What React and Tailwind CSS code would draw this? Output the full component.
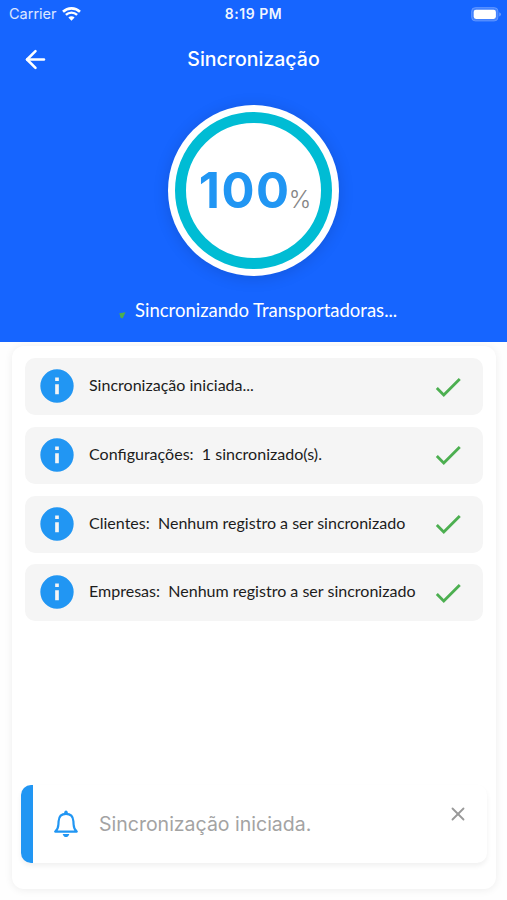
import { ArrowLeft, X } from 'lucide-react'

// ─── Data ──────────────────────────────────────────────────────────────────────
const SYNC_LOGS = [
  { id: 'start', text: 'Sincronização iniciada...' },
  { id: 'config', text: 'Configurações:  1 sincronizado(s).' },
  { id: 'clients', text: 'Clientes:  Nenhum registro a ser sincronizado' },
  { id: 'companies', text: 'Empresas:  Nenhum registro a ser sincronizado' },
]

// ─── Icons ─────────────────────────────────────────────────────────────────────
const WifiIcon = () => (
  <svg width="19" height="14" viewBox="0 0 19 14" fill="none" stroke="white">
    <path d="M1 4.8a12.2 12.2 0 0 1 17 0" strokeWidth="2.6" />
    <path d="M3.9 7.9a8 8 0 0 1 11.2 0" strokeWidth="2.4" />
    <path d="M6.4 10.6a4.4 4.4 0 0 1 6.2 0l-3.1 3.2z" fill="white" stroke="none" />
  </svg>
)

const BatteryIcon = () => (
  <svg width="31" height="15" viewBox="0 0 31 15">
    <rect x="0.5" y="0.5" width="26.6" height="13.6" rx="4" fill="white" fillOpacity="0.2" stroke="white" strokeOpacity="0.2" />
    <rect x="2.7" y="2.7" width="22.2" height="9.2" rx="2.3" fill="white" />
    <path d="M28.4 5.2c1.9.8 1.9 3.4 0 4.2z" fill="white" fillOpacity="0.45" />
  </svg>
)

const InfoIcon = () => (
  <svg className="shrink-0 mb-px" width="40" height="40" viewBox="0 0 24 24" fill="#2196f3">
    <path d="M12 2a10 10 0 1 0 0 20 10 10 0 0 0 0-20zm1.1 15h-2.2v-6h2.2zm0-8h-2.2V6.9h2.2z" />
  </svg>
)

const CheckIcon = () => (
  <svg className="shrink-0" width="34" height="34" viewBox="0 0 24 24" fill="#4caf50">
    <path d="M9 16.17 4.83 12l-1.42 1.41L9 19 21 7l-1.41-1.41z" />
  </svg>
)

const BellIcon = () => (
  <svg className="shrink-0" width="24" height="28" viewBox="0 0 24 28" fill="none" stroke="#2196f3" strokeWidth="2.2" strokeLinejoin="round">
    <path d="M1.2 21.6h21.6c-2.2-1.7-3-3.3-3.2-7.1l-.2-3.2C19.1 6.3 16.2 3.9 12 3.9s-7.1 2.4-7.4 7.4l-.2 3.2c-.2 3.8-1 5.4-3.2 7.1z" />
    <path d="M10.3 3.6V2.3a1.7 1.7 0 0 1 3.4 0v1.3z" fill="#2196f3" stroke="none" />
    <path d="M8.7 24h6.6c-.4 2-1.8 3.1-3.3 3.1S9.100 26 8.700 24z" fill="#2196f3" stroke="none" />
  </svg>
)

// ─── Header ────────────────────────────────────────────────────────────────────
const StatusBar = () => (
  <div className="grid grid-cols-3 items-center h-7 pl-[9px] pr-[5px] text-white">
    <div className="flex items-center gap-[5px] text-[14.5px] text-white/85">
      Carrier
      <WifiIcon />
    </div>
    <div className="-mr-[4px] -ml-[9px] pl-px pb-px text-center text-[14px] font-semibold tracking-[0.5px] text-white/95">8:19 PM</div>
    <div className="flex justify-end">
      <BatteryIcon />
    </div>
  </div>
)

const ProgressCircle = ({ value }) => (
  <div className="size-[171px] rounded-full bg-white p-[7px] shadow-[0_2px_16px_rgba(0,0,0,0.14)]">
    <div className="size-full rounded-full border-[11.5px] border-[#00bcd4] flex items-baseline justify-center pt-[38px] pl-[3px]">
      <span className="text-[49px] leading-[60px] font-bold tracking-[1.6px] text-[#2196f3]">{value}</span>
      <span className="-ml-[2px] text-[24px] font-light text-[#858585]">%</span>
    </div>
  </div>
)

const Header = () => (
  <header className="h-[342px] bg-[#1665ff] text-white">
    <StatusBar />
    <div className="grid grid-cols-[72px_1fr_72px] items-center h-[63px]">
      <button className="ml-[21px] w-[29px]">
        <ArrowLeft size={29} strokeWidth={2.1} />
      </button>
      <h1 className="pt-px text-center text-[19.5px] font-medium">Sincronização</h1>
    </div>
    <div className="flex justify-center pt-[14px]">
      <ProgressCircle value={100} />
    </div>
    <div className="flex items-center pl-[119px] mt-[20px] h-7">
      <svg className="mt-[11px] mr-[9px]" width="7" height="7" viewBox="0 0 7 7" fill="#4caf50">
        <path d="M.3 1.3 6.6.3 3.6 6.6 1.6 5.7z" />
      </svg>
      <span className="pt-px font-['Lato',sans-serif] text-[18.5px] whitespace-nowrap">Sincronizando Transportadoras...</span>
    </div>
  </header>
)

// ─── Sync List ─────────────────────────────────────────────────────────────────
const LogRow = ({ log }) => (
  <li className="flex items-center h-[57px] pl-3 pr-[18px] rounded-[10px] bg-[#f5f5f5]">
    <InfoIcon />
    <span className="flex-1 ml-3 pb-[3px] font-['Lato',sans-serif] text-[16.05px] text-[#1c1c1c] whitespace-pre">
      {log.text}
    </span>
    <CheckIcon />
  </li>
)

// ─── Toast ─────────────────────────────────────────────────────────────────────
const Toast = ({ message }) => (
  <div className="flex h-[78px] mx-[9px] rounded-[10px] overflow-hidden bg-white shadow-[0_3px_5px_rgba(0,0,0,0.06)]">
    <div className="w-3 bg-[#2196f3]" />
    <div className="flex flex-1 items-center pl-[21px] pr-[18px]">
      <BellIcon />
      <p className="flex-1 ml-[21px] pt-px text-[19.5px] text-[#a3a3a3]">{message}</p>
      <button className="self-start mt-[18px] text-[#999]">
        <X size={22} strokeWidth={2} />
      </button>
    </div>
  </div>
)

const App = () => (
  <div className="flex flex-col w-[507px] h-[900px] overflow-hidden bg-[#fefefe] font-['Inter',sans-serif]">
    <Header />
    <main className="flex flex-col justify-between h-[543px] mt-1 ml-3 mr-[11px] pt-3 pb-[26px] rounded-[12px] bg-white shadow-[0_1px_8px_rgba(0,0,0,0.07)]">
      <ul className="flex flex-col gap-[11.8px] mx-[13px]">
        {SYNC_LOGS.map((log) => (
          <LogRow key={log.id} log={log} />
        ))}
      </ul>
      <Toast message="Sincronização iniciada." />
    </main>
  </div>
)

export default App
